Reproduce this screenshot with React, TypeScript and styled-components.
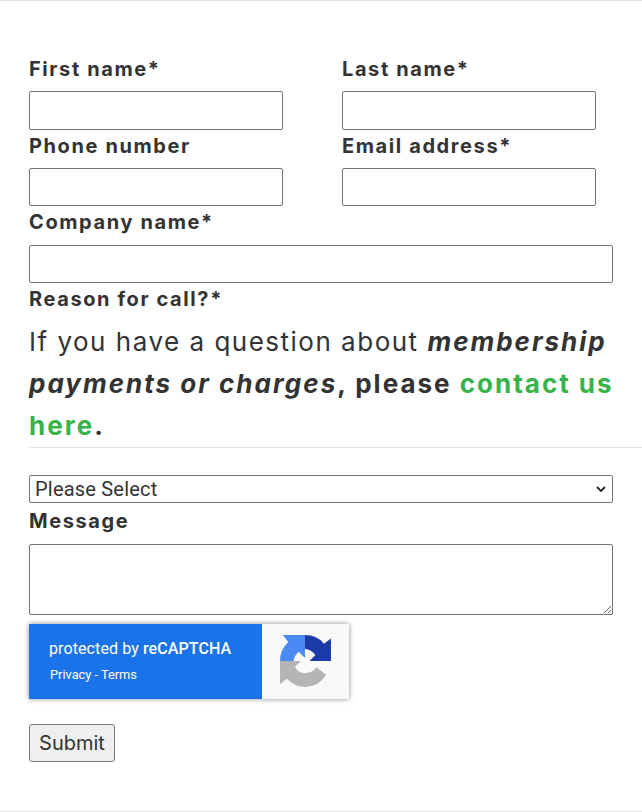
import styled, {createGlobalStyle} from "styled-components";

const GlobalStyle = createGlobalStyle`
    html, body {
        margin: 0;
        padding: 0;
        background: #fff;
    }

    body {
        font-family: Inter, "Liberation Sans", sans-serif;
        color: #333;
    }
`

const chevron = "data:image/svg+xml,%3Csvg xmlns='http://www.w3.org/2000/svg' width='10' height='7' viewBox='0 0 10 7'%3E%3Cpath d='M1 1l4 4 4-4' fill='none' stroke='%23222' stroke-width='1.8'/%3E%3C/svg%3E";

const App = () => {
    return (
        <Page>
            <GlobalStyle/>
            <Form onSubmit={(e) => e.preventDefault()}>
                <TwoColumns>
                    <Field>
                        <Label>First name*</Label>
                        <Input type="text"/>
                    </Field>
                    <Field>
                        <Label>Last name*</Label>
                        <Input type="text"/>
                    </Field>
                    <Field>
                        <Label>Phone number</Label>
                        <Input type="text"/>
                    </Field>
                    <Field>
                        <Label>Email address*</Label>
                        <Input type="text"/>
                    </Field>
                </TwoColumns>

                <WideField>
                    <Label>Company name*</Label>
                    <Input type="text"/>
                </WideField>

                <Label>Reason for call?*</Label>
                <Notice>
                    If you have a question about <Strong><em>membership payments or charges</em>, please <GreenLink href="#">contact us here</GreenLink>.</Strong>
                </Notice>
                <Divider/>

                <Select defaultValue="">
                    <option value="">Please Select</option>
                </Select>

                <Label>Message</Label>
                <TextArea/>

                <RecaptchaBadge>
                    <RecaptchaText>
                        <Protected>protected by <b>reCAPTCHA</b></Protected>
                        <RecaptchaLinks>Privacy - Terms</RecaptchaLinks>
                    </RecaptchaText>
                    <RecaptchaLogo>
                        <svg width="52" height="52" viewBox="58 50 150 150">
                            <path fill="#b5b5b5" d="M58 125 H118 L101 142 Q112 160 130 160 Q150 160 163 143 L191 165 Q170 200 130 200 Q100 200 78 176 L58 192 Z"/>
                            <path fill="#4a8af4" d="M58 125 Q58 92 82 70 L66 50 H130 V116 L112 98 Q100 108 97 125 Z"/>
                            <path fill="#1c3aa9" d="M130 50 Q165 50 185 75 L205 60 V125 H143 L160 108 Q148 92 130 90 Z"/>
                        </svg>
                    </RecaptchaLogo>
                </RecaptchaBadge>

                <SubmitButton type="submit">Submit</SubmitButton>
            </Form>
        </Page>
    );
};

export default App;

const Page = styled.div`
    width: 642px;
    height: 812px;
    box-sizing: border-box;
    border-top: 1px solid #e5e5e5;
    border-bottom: 1px solid #e5e5e5;
    overflow: hidden;
`

const Form = styled.form`
    padding: 51.75px 0 0 29px;
    display: flex;
    flex-direction: column;
    align-items: flex-start;
`

const TwoColumns = styled.div`
    display: grid;
    grid-template-columns: 254px 254px;
    column-gap: 59px;
`

const Field = styled.div`
    display: flex;
    flex-direction: column;
`

const WideField = styled(Field)`
    width: 584px;
`

const Label = styled.label`
    display: block;
    font-size: 20px;
    font-weight: 700;
    line-height: 33px;
    letter-spacing: 1.6px;
    margin-bottom: 5.25px;
    color: #333;
`

const Input = styled.input`
    box-sizing: border-box;
    width: 100%;
    height: 38.5px;
    padding: 1px 2px;
    border: 1px solid #767676;
    border-radius: 2px;
    background: #fff;
`

const Notice = styled.p`
    margin: 0;
    width: 613px;
    font-size: 26px;
    line-height: 42px;
    letter-spacing: 1.5px;
    color: #333;
`

const Strong = styled.strong`
    letter-spacing: 2px;
`

const GreenLink = styled.a`
    color: #37b34a;
    text-decoration: none;
`

const Divider = styled.div`
    width: 613px;
    height: 1px;
    background: #e5e5e5;
    margin-bottom: 27px;
`

const Select = styled.select`
    appearance: none;
    box-sizing: border-box;
    width: 584px;
    height: 28px;
    padding: 0 0 0 5px;
    font-family: Roboto, sans-serif;
    font-size: 20px;
    letter-spacing: 0.2px;
    color: #333;
    border: 1px solid #767676;
    border-radius: 2px;
    background: #fff url("${chevron}") no-repeat right 6px center;
    margin-bottom: 2px;
`

const TextArea = styled.textarea`
    display: block;
    box-sizing: border-box;
    width: 584px;
    height: 71px;
    border: 1px solid #767676;
    border-radius: 2px;
    margin-bottom: 9px;
`

const RecaptchaBadge = styled.div`
    display: flex;
    width: 320px;
    height: 75px;
    box-shadow: 0 0 5px rgba(128, 128, 128, 0.9);
    margin-bottom: 25px;
`

const RecaptchaText = styled.div`
    width: 233px;
    background: #1a73e8;
    color: #fff;
    font-family: Roboto, sans-serif;
    padding: 15px 0 0 20px;
    box-sizing: border-box;
`

const Protected = styled.div`
    font-size: 16px;
    line-height: 20px;
    letter-spacing: 0.1px;

    b {
        font-weight: 500;
    }
`

const RecaptchaLinks = styled.div`
    font-size: 12.8px;
    line-height: 16px;
    margin: 8px 0 0 1px;
`

const RecaptchaLogo = styled.div`
    flex: 1;
    background: #f9f9f9;
    display: flex;
    align-items: center;
    justify-content: center;
`

const SubmitButton = styled.button`
    box-sizing: border-box;
    width: 86px;
    height: 38px;
    padding: 0;
    font-family: Inter, sans-serif;
    font-size: 20px;
    color: #333;
    background: #efefef;
    border: 1px solid #767676;
    border-radius: 3px;
`
